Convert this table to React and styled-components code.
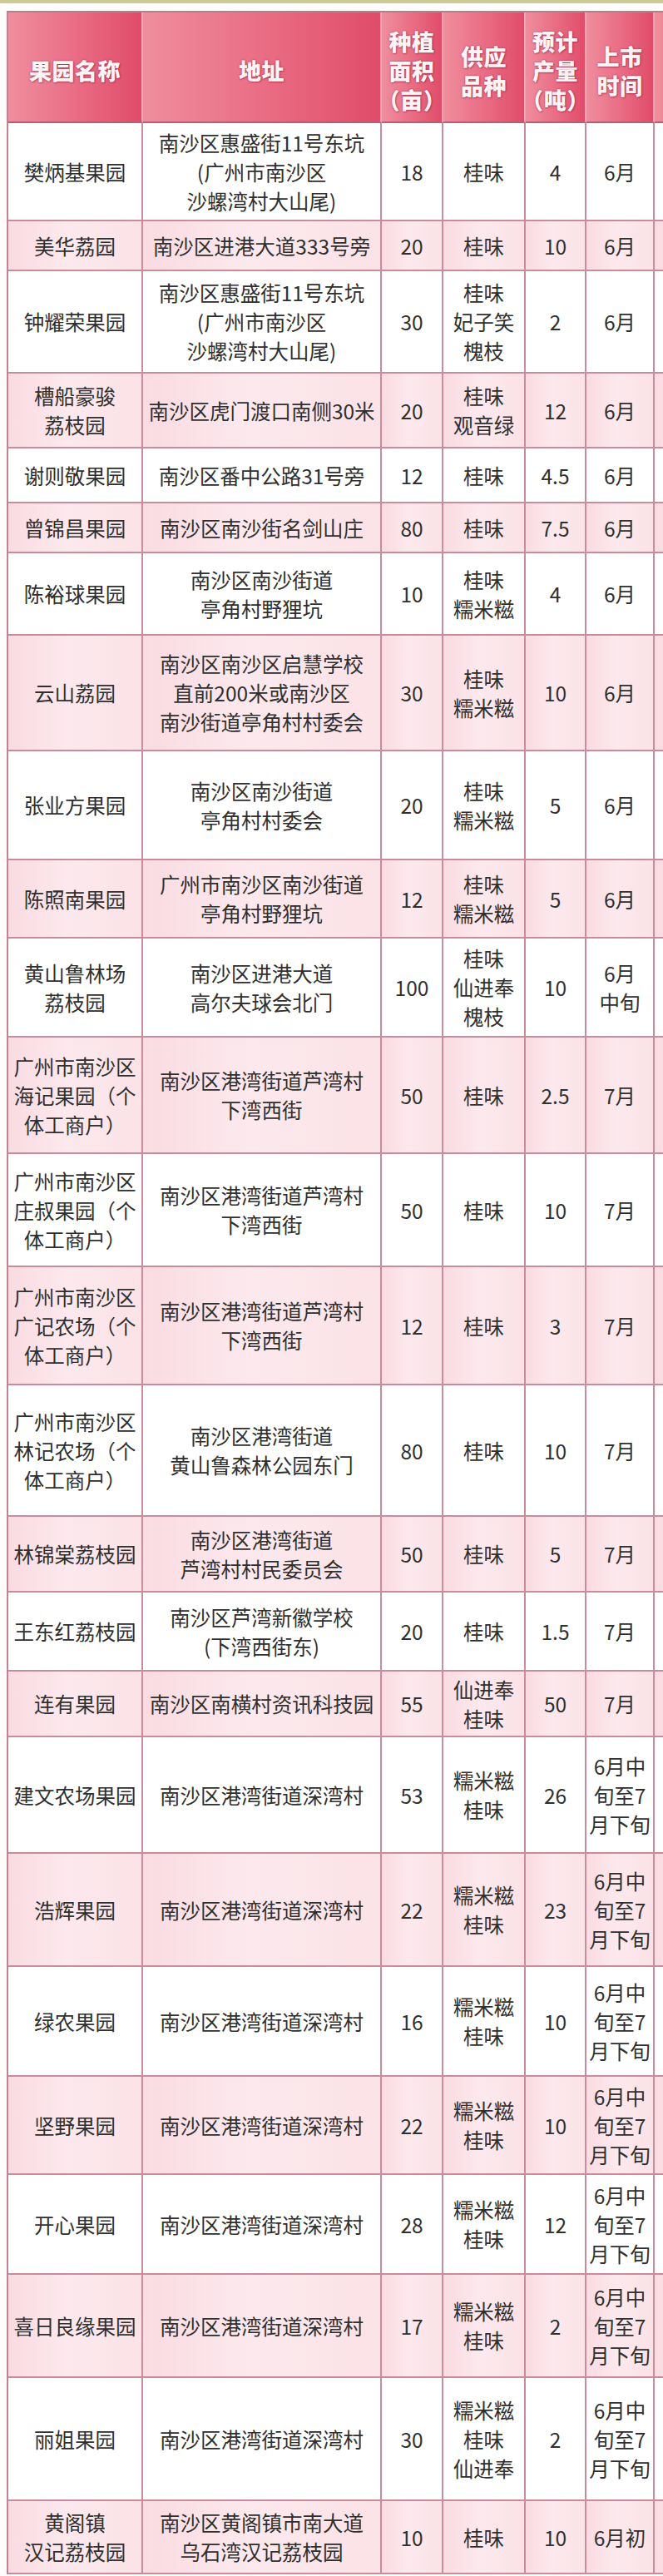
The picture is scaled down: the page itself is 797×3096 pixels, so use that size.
import React from "react";
import styled, { createGlobalStyle } from "styled-components";

const GlobalStyle = createGlobalStyle`
  html, body { margin: 0; padding: 0; background: #ffffff; }
  body { overflow-x: hidden; font-family: "Noto Sans CJK SC", "Noto Sans", sans-serif; }
`;

const COLS = "162px 287px 74px 99px 73px 82px 110px";

const Page = styled.div`
  width: 797px;
  height: 3096px;
  overflow: hidden;
  background: #fffdfb;
`;

const TopStrip = styled.div`
  height: 4px;
  background: #cdc995;
`;

const Table = styled.div`
  margin: 9px 0 0 8px;
  width: 889px;
  border-top: 2px solid #c0788c;
  border-left: 2px solid #bf8394;
`;

const Row = styled.div`
  display: grid;
  grid-template-columns: ${COLS};
  height: ${(p) => p.$h}px;
  box-sizing: border-box;
`;

const HeadCell = styled.div`
  display: flex;
  flex-direction: column;
  align-items: center;
  justify-content: center;
  box-sizing: border-box;
  padding-top: 8px;
  border-right: 2px solid #f2a6b3;
  border-bottom: 2px solid #b85d74;
  background: linear-gradient(90deg, #ef8e9e 0%, #e96a82 55%, #e04c6a 100%);
  color: #fff3f5;
  font-family: "Noto Sans CJK SC", sans-serif;
  font-weight: 900;
  font-size: 27px;
  line-height: 35px;
  letter-spacing: 0.5px;
  white-space: nowrap;
  text-shadow: 0 0 2px rgba(140, 30, 60, 0.75), 1px 1px 2px rgba(140, 30, 60, 0.45);
`;

const Cell = styled.div`
  display: flex;
  flex-direction: column;
  align-items: center;
  justify-content: center;
  box-sizing: border-box;
  border-right: 2px solid #c98c9d;
  border-bottom: 2px solid #c98c9d;
  background: ${(p) =>
    p.$pink
      ? "linear-gradient(90deg, #fadbe2 0%, #fce9ed 45%, #fbe2e7 100%)"
      : "#ffffff"};
  color: #2f2f2f;
  font-family: "Noto Sans CJK SC", sans-serif;
  font-weight: 400;
  font-size: 24.5px;
  line-height: 35px;
  white-space: nowrap;
  text-align: center;
`;

const Line = styled.span`
  display: block;
`;

const header = [
  ["果园名称"],
  ["地址"],
  ["种植", "面积", "（亩）"],
  ["供应", "品种"],
  ["预计", "产量", "（吨）"],
  ["上市", "时间"],
  [""],
];

const SW = ["南沙区港湾街道深湾村"];
const LATE = ["6月中", "旬至7", "月下旬"];
const NB = ["糯米糍", "桂味"];
const GW = ["桂味"];
const XW = ["南沙区港湾街道芦湾村", "下湾西街"];

const rows = [
  [118, ["樊炳基果园"], ["南沙区惠盛街11号东坑", "(广州市南沙区", "沙螺湾村大山尾)"], ["18"], GW, ["4"], ["6月"]],
  [60, ["美华荔园"], ["南沙区进港大道333号旁"], ["20"], GW, ["10"], ["6月"]],
  [123, ["钟耀荣果园"], ["南沙区惠盛街11号东坑", "(广州市南沙区", "沙螺湾村大山尾)"], ["30"], ["桂味", "妃子笑", "槐枝"], ["2"], ["6月"]],
  [90, ["槽船豪骏", "荔枝园"], ["南沙区虎门渡口南侧30米"], ["20"], ["桂味", "观音绿"], ["12"], ["6月"]],
  [66, ["谢则敬果园"], ["南沙区番中公路31号旁"], ["12"], GW, ["4.5"], ["6月"]],
  [60, ["曾锦昌果园"], ["南沙区南沙街名剑山庄"], ["80"], GW, ["7.5"], ["6月"]],
  [99, ["陈裕球果园"], ["南沙区南沙街道", "亭角村野狸坑"], ["10"], ["桂味", "糯米糍"], ["4"], ["6月"]],
  [139, ["云山荔园"], ["南沙区南沙区启慧学校", "直前200米或南沙区", "南沙街道亭角村村委会"], ["30"], ["桂味", "糯米糍"], ["10"], ["6月"]],
  [131, ["张业方果园"], ["南沙区南沙街道", "亭角村村委会"], ["20"], ["桂味", "糯米糍"], ["5"], ["6月"]],
  [94, ["陈照南果园"], ["广州市南沙区南沙街道", "亭角村野狸坑"], ["12"], ["桂味", "糯米糍"], ["5"], ["6月"]],
  [119, ["黄山鲁林场", "荔枝园"], ["南沙区进港大道", "高尔夫球会北门"], ["100"], ["桂味", "仙进奉", "槐枝"], ["10"], ["6月", "中旬"]],
  [140, ["广州市南沙区", "海记果园（个", "体工商户）"], XW, ["50"], GW, ["2.5"], ["7月"]],
  [136, ["广州市南沙区", "庄叔果园（个", "体工商户）"], XW, ["50"], GW, ["10"], ["7月"]],
  [142, ["广州市南沙区", "广记农场（个", "体工商户）"], XW, ["12"], GW, ["3"], ["7月"]],
  [158, ["广州市南沙区", "林记农场（个", "体工商户）"], ["南沙区港湾街道", "黄山鲁森林公园东门"], ["80"], GW, ["10"], ["7月"]],
  [91, ["林锦棠荔枝园"], ["南沙区港湾街道", "芦湾村村民委员会"], ["50"], GW, ["5"], ["7月"]],
  [95, ["王东红荔枝园"], ["南沙区芦湾新徽学校", "(下湾西街东)"], ["20"], GW, ["1.5"], ["7月"]],
  [79, ["连有果园"], ["南沙区南横村资讯科技园"], ["55"], ["仙进奉", "桂味"], ["50"], ["7月"]],
  [140, ["建文农场果园"], SW, ["53"], NB, ["26"], LATE],
  [136, ["浩辉果园"], SW, ["22"], NB, ["23"], LATE],
  [132, ["绿农果园"], SW, ["16"], NB, ["10"], LATE],
  [118, ["坚野果园"], SW, ["22"], NB, ["10"], LATE],
  [120, ["开心果园"], SW, ["28"], NB, ["12"], LATE],
  [124, ["喜日良缘果园"], SW, ["17"], NB, ["2"], LATE],
  [148, ["丽姐果园"], SW, ["30"], ["糯米糍", "桂味", "仙进奉"], ["2"], LATE],
  [88, ["黄阁镇", "汉记荔枝园"], ["南沙区黄阁镇市南大道", "乌石湾汉记荔枝园"], ["10"], GW, ["10"], ["6月初"]],
];

function Lines({ items }) {
  return items.map((t, i) => <Line key={i}>{t}</Line>);
}

export default function App() {
  return (
    <>
      <GlobalStyle />
      <Page>
        <TopStrip />
        <Table>
          <Row $h={133}>
            {header.map((h, i) => (
              <HeadCell key={i}>
                <Lines items={h} />
              </HeadCell>
            ))}
          </Row>
          {rows.map(([h, ...cells], r) => (
            <Row key={r} $h={h}>
              {cells.map((c, i) => (
                <Cell key={i} $pink={r % 2 === 1}>
                  <Lines items={c} />
                </Cell>
              ))}
              <Cell $pink={r % 2 === 1} />
            </Row>
          ))}
        </Table>
      </Page>
    </>
  );
}
